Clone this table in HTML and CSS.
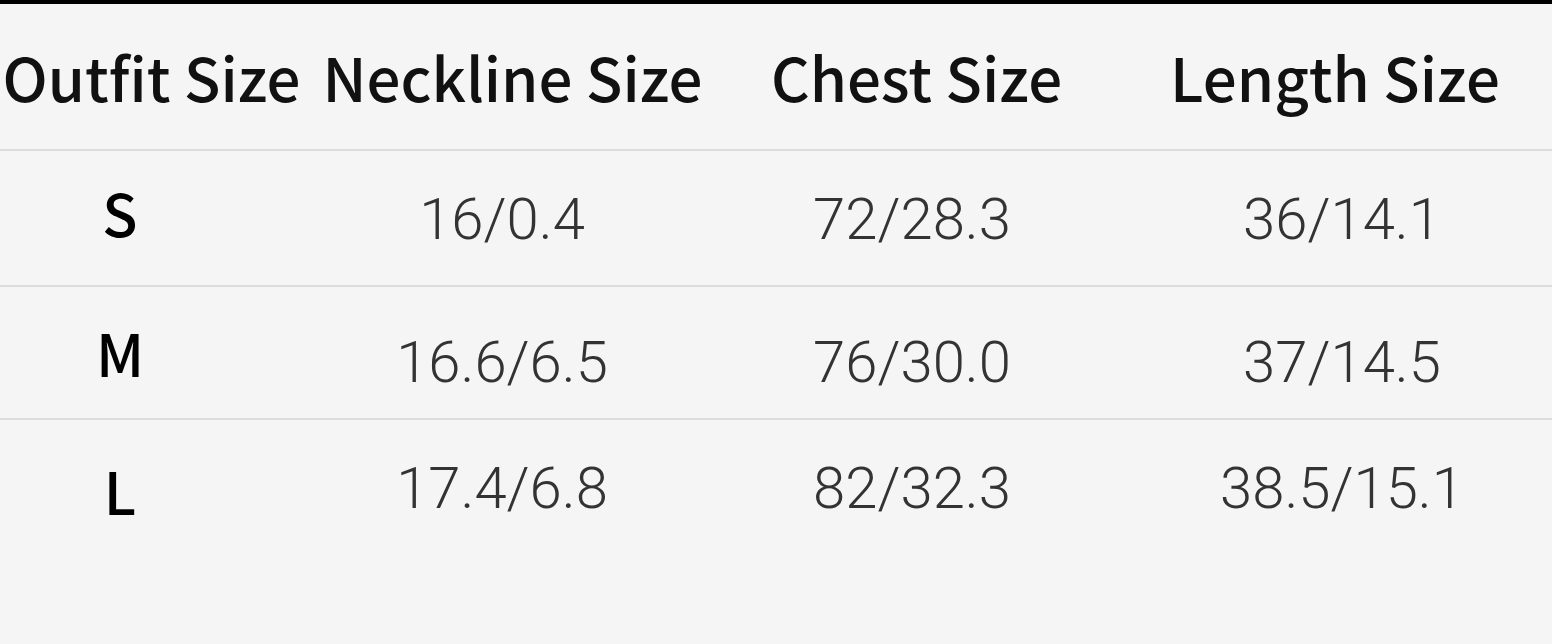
FILE: index.html
```html
<!DOCTYPE html>
<html>
<head>
<meta charset="utf-8">
<link rel="stylesheet" href="styles.css">
</head>
<body>
<div class="topbar"></div>
<div class="table">
  <div class="row head">
    <div class="cell c1">Outfit Size</div>
    <div class="cell c2">Neckline Size</div>
    <div class="cell c3">Chest Size</div>
    <div class="cell c4">Length Size</div>
  </div>
  <div class="row data r1">
    <div class="cell c1 size">S</div>
    <div class="cell c2 num">16/0.4</div>
    <div class="cell c3 num">72/28.3</div>
    <div class="cell c4 num">36/14.1</div>
  </div>
  <div class="row data r2">
    <div class="cell c1 size">M</div>
    <div class="cell c2 num">16.6/6.5</div>
    <div class="cell c3 num">76/30.0</div>
    <div class="cell c4 num">37/14.5</div>
  </div>
  <div class="row data r3 last">
    <div class="cell c1 size">L</div>
    <div class="cell c2 num">17.4/6.8</div>
    <div class="cell c3 num">82/32.3</div>
    <div class="cell c4 num">38.5/15.1</div>
  </div>
</div>
</body>
</html>
```
FILE: styles.css
```css
html, body {
  margin: 0;
  padding: 0;
  background: #f5f5f5;
}
body {
  width: 1552px;
  height: 644px;
  overflow: hidden;
}
.topbar {
  height: 4px;
  background: #000;
}
.table {
  display: flex;
  flex-direction: column;
}
.row {
  display: grid;
  grid-template-columns: 310px 400px 410px 432px;
  align-items: start;
  border-bottom: 2px solid #dcdcdc;
  box-sizing: border-box;
}
.row.last {
  border-bottom: none;
}
.head { height: 147px; }
.r1 { height: 136px; }
.r2 { height: 133px; }
.r3 { height: 224px; }
.cell {
  text-align: center;
  white-space: nowrap;
  line-height: 1;
}
.head .cell {
  font-family: "Noto Sans CJK JP", "Noto Sans", sans-serif;
  font-weight: 500;
  font-size: 60px;
  color: #111;
  padding-top: 42px;
}
.head .c1 { padding-right: 7px; }
.head .c2 { padding-left: 5px; }
.head .c3 { padding-left: 3px; }
.head .c4 { padding-right: 2px; }
.size {
  font-family: "Noto Sans CJK JP", "Noto Sans", sans-serif;
  font-weight: 500;
  font-size: 58px;
  color: #000;
  padding-right: 70px;
}
.num {
  font-family: Roboto, "Liberation Sans", sans-serif;
  font-weight: 300;
  font-size: 58px;
  color: #333;
}
.c2.num { padding-right: 16px; }
.c3.num { padding-right: 6px; }
.c4.num { padding-left: 12px; }
.r1 .num { padding-top: 39px; }
.r2 .num { padding-top: 46px; }
.r3 .num { padding-top: 39px; }
.r1 .size { padding-top: 32px; }
.r2 .size { padding-top: 36px; }
.r3 .size { padding-top: 41px; }
```
